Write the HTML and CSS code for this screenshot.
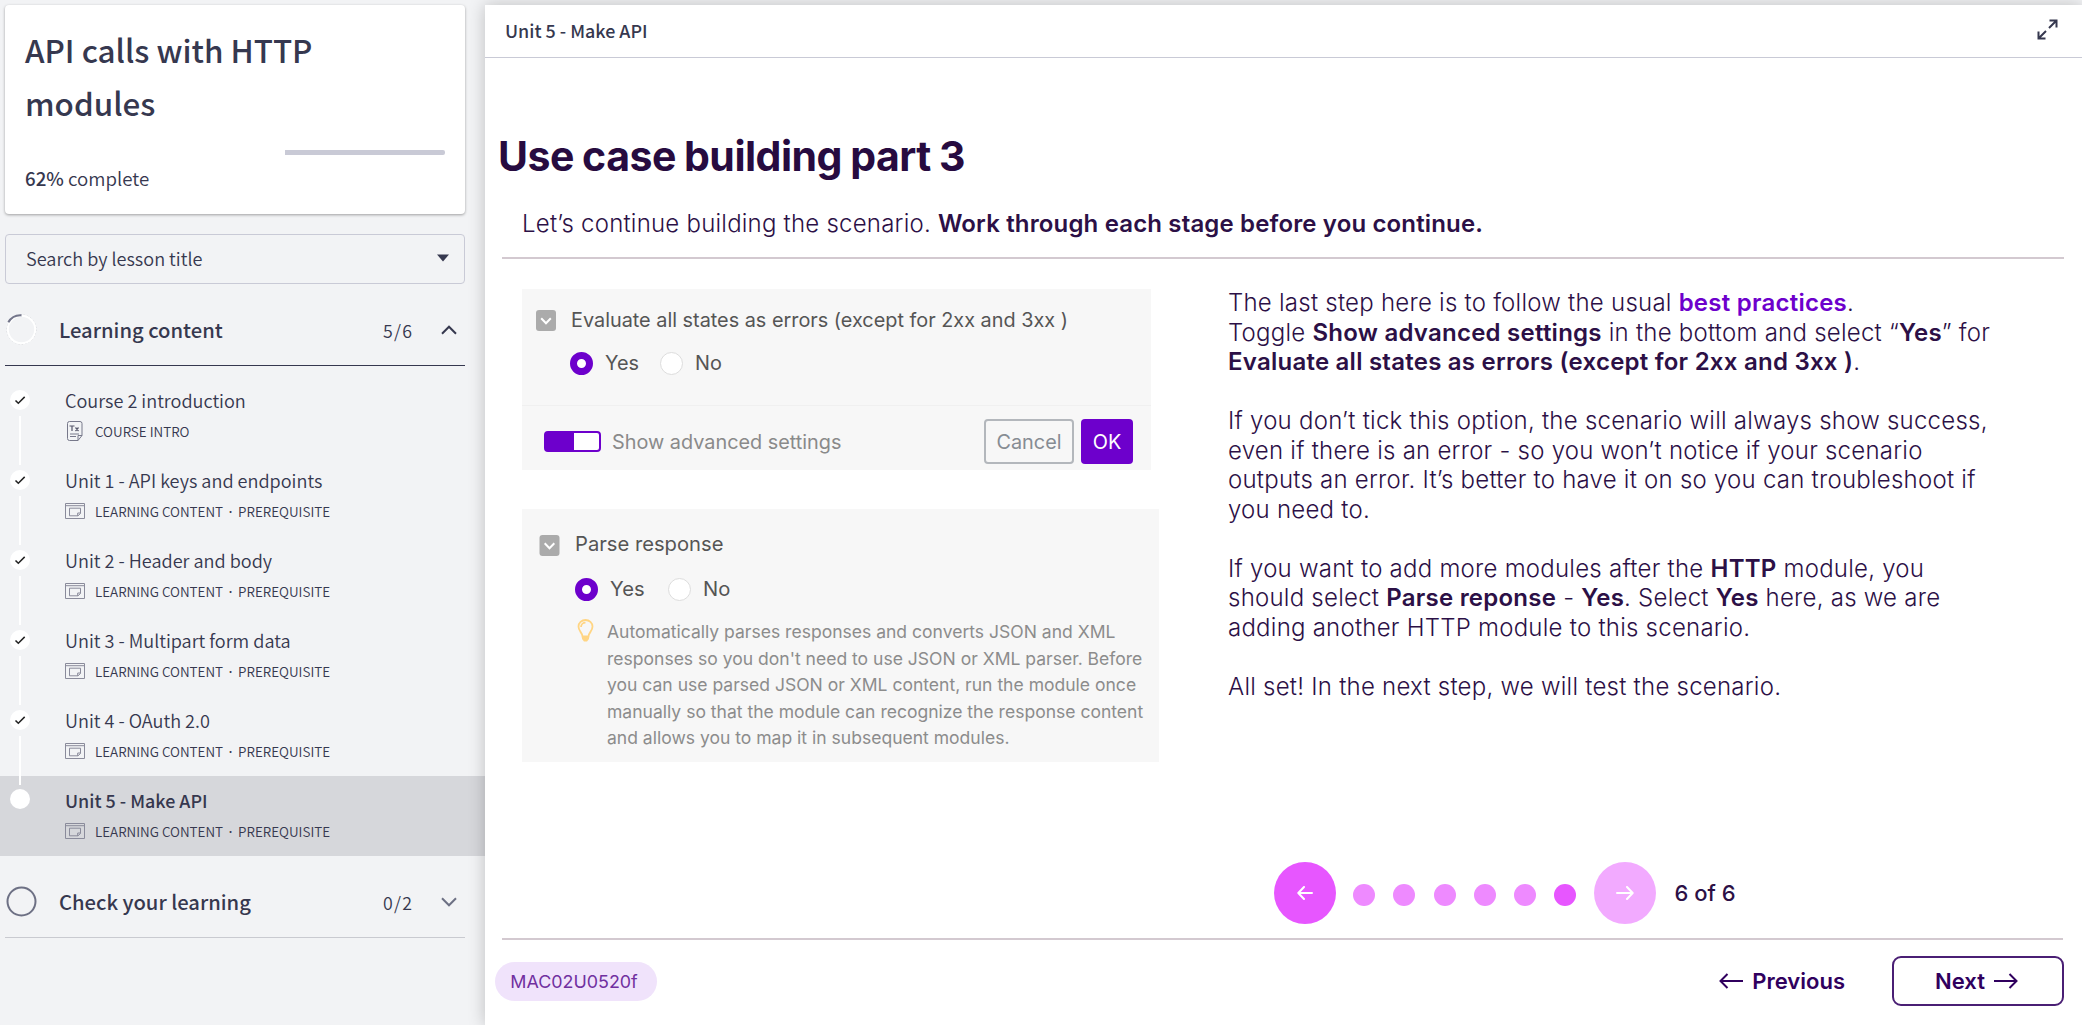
FILE: index.html
```html
<!DOCTYPE html>
<html lang="en">
<head>
<meta charset="utf-8">
<title>API calls with HTTP modules</title>
<link rel="stylesheet" href="styles.css">
</head>
<body>
<svg class="defs" width="0" height="0">
  <symbol id="check" viewBox="0 0 20 20"><path d="M5.5 10.4l2.8 2.9 6.4-6.4" fill="none" stroke="#222" stroke-width="1.5"/></symbol>
  <symbol id="lesson" viewBox="0 0 20 16"><path d="M.5.5h19v15H.5zM.5 2.7h19M4.5 5.2h11v5.3l-2.5 2.3H4.5zM15.5 10h-2.8v2.8" fill="none" stroke="#8a8b9b" stroke-width="1"/></symbol>
  <symbol id="fold" viewBox="0 0 20 21"><rect width="20" height="21" rx="3" fill="#ababab"/><path d="M5.2 8.2l4.8 5 4.8-5" fill="none" stroke="#fff" stroke-width="2"/></symbol>
</svg>
<div class="app">
  <aside class="sidebar">
    <div class="card">
      <h2 class="course">API calls with HTTP<br>modules</h2>
      <div class="bar"><div class="rest"></div></div>
      <p class="complete"><b>62%</b> complete</p>
    </div>
    <div class="search"><span>Search by lesson title</span><svg width="12" height="8" viewBox="0 0 12 8"><path d="M0 .5h12L6 7.5z" fill="#36384f"/></svg></div>
    <div class="section open">
      <svg class="ring" width="31" height="31" viewBox="0 0 31 31"><circle cx="15.5" cy="15.5" r="14.5" fill="none" stroke="#c4c5cc" stroke-width="1" stroke-dasharray="1.5 2"/><circle cx="15.5" cy="15.5" r="13.7" fill="none" stroke="#fff" stroke-width="2"/><path d="M2.4 8.3A14 14 0 0 1 15.5 1.3" fill="none" stroke="#73758a" stroke-width="2.2"/></svg>
      <h3>Learning content</h3><span class="count">5/6</span>
      <svg width="16" height="10" viewBox="0 0 16 10"><path d="M1 8.7l7-7 7 7" fill="none" stroke="#36384f" stroke-width="2"/></svg>
    </div>
    <ul class="lessons">
      <li><svg class="dot" width="20" height="20"><use href="#check"/></svg><i class="track"></i><div class="info"><p class="name">Course 2 introduction</p><p class="meta"><svg width="20" height="20" viewBox="0 0 20 20"><path d="M4.5.5h10.5q2 0 2 2v12l-4 5H4.5q-2 0-2-2v-15q0-2 2-2zM17 14.5h-4v5M5 13h9M5 15.5h6" fill="none" stroke="#77788a"/><path d="M4.5 5h5M7 5v5M10.5 6.5l3 3.5M13.5 6.5l-3 3.5" fill="none" stroke="#55566a" stroke-width="1.2"/></svg><span>COURSE INTRO</span></p></div></li>
      <li><svg class="dot" width="20" height="20"><use href="#check"/></svg><i class="track"></i><div class="info"><p class="name">Unit 1 - API keys and endpoints</p><p class="meta"><svg width="20" height="16"><use href="#lesson"/></svg><span>LEARNING CONTENT <i class="sep">·</i> PREREQUISITE</span></p></div></li>
      <li><svg class="dot" width="20" height="20"><use href="#check"/></svg><i class="track"></i><div class="info"><p class="name">Unit 2 - Header and body</p><p class="meta"><svg width="20" height="16"><use href="#lesson"/></svg><span>LEARNING CONTENT <i class="sep">·</i> PREREQUISITE</span></p></div></li>
      <li><svg class="dot" width="20" height="20"><use href="#check"/></svg><i class="track"></i><div class="info"><p class="name">Unit 3 - Multipart form data</p><p class="meta"><svg width="20" height="16"><use href="#lesson"/></svg><span>LEARNING CONTENT <i class="sep">·</i> PREREQUISITE</span></p></div></li>
      <li><svg class="dot" width="20" height="20"><use href="#check"/></svg><i class="track"></i><div class="info"><p class="name">Unit 4 - OAuth 2.0</p><p class="meta"><svg width="20" height="16"><use href="#lesson"/></svg><span>LEARNING CONTENT <i class="sep">·</i> PREREQUISITE</span></p></div></li>
      <li class="active"><span class="dot"></span><div class="info"><p class="name">Unit 5 - Make API</p><p class="meta"><svg width="20" height="16"><use href="#lesson"/></svg><span>LEARNING CONTENT <i class="sep">·</i> PREREQUISITE</span></p></div></li>
    </ul>
    <div class="section closed">
      <svg class="ring" width="31" height="31" viewBox="0 0 31 31"><circle cx="15.5" cy="15.5" r="14" fill="none" stroke="#6d7084" stroke-width="2"/></svg>
      <h3>Check your learning</h3><span class="count">0/2</span>
      <svg width="16" height="10" viewBox="0 0 16 10"><path d="M1 1.3l7 7 7-7" fill="none" stroke="#6d7084" stroke-width="2"/></svg>
    </div>
  </aside>
  <main class="main">
    <header class="top"><span>Unit 5 - Make API</span>
      <svg width="21" height="21" viewBox="0 0 21 21"><path d="M12 9l7-7M12.5 1.5h7v7M9 12l-7 7M8.5 19.5h-7v-7" fill="none" stroke="#36384f" stroke-width="2"/></svg>
    </header>
    <div class="slide">
      <h1>Use case building part 3</h1>
      <p class="lead"><span>Let’s continue building the scenario. </span><b>Work through each stage before you continue.</b></p>
      <div class="cols">
        <div class="shots">
          <div class="panel one">
            <div class="opt"><svg width="20" height="21"><use href="#fold"/></svg><span class="label">Evaluate all states as errors (except for 2xx and 3xx )</span></div>
            <div class="radios"><i class="radio on"></i><span class="yes">Yes</span><i class="radio"></i><span class="no">No</span></div>
            <div class="foot"><i class="toggle"></i><span class="adv">Show advanced settings</span><span class="btn cancel">Cancel</span><span class="btn ok">OK</span></div>
          </div>
          <div class="panel two">
            <div class="opt"><svg width="21" height="21"><use href="#fold"/></svg><span class="label">Parse response</span></div>
            <div class="radios"><i class="radio on"></i><span class="yes">Yes</span><i class="radio"></i><span class="no">No</span></div>
            <div class="tip"><svg width="17" height="23" viewBox="0 0 17 23"><path d="M5.5 17.5c0-4-4-5-4-10a7 6.5 0 0 1 14 0c0 5-4 6-4 10z" fill="none" stroke="#ffd583" stroke-width="1.8"/><path d="M4 8a4.5 4.5 0 0 1 4.5-4.3" fill="none" stroke="#ffd583" stroke-width="1.8"/><path d="M5 17.5h7v2.5l-2 2.5H7l-2-2.5z" fill="#ffd583"/></svg><p>Automatically parses responses and converts JSON and XML<br>responses so you don't need to use JSON or XML parser. Before<br>you can use parsed JSON or XML content, run the module once<br>manually so that the module can recognize the response content<br>and allows you to map it in subsequent modules.</p></div>
          </div>
        </div>
        <div class="text">
          <p>The last step here is to follow the usual <b class="link">best practices</b>.<br>Toggle <b>Show advanced settings</b> in the bottom and select “<b>Yes</b>” for<br><b>Evaluate all states as errors (except for 2xx and 3xx )</b>.</p>
          <p>If you don’t tick this option, the scenario will always show success,<br>even if there is an error - so you won’t notice if your scenario<br>outputs an error. It’s better to have it on so you can troubleshoot if<br>you need to.</p>
          <p>If you want to add more modules after the <b>HTTP</b> module, you<br>should select <b>Parse reponse</b> - <b>Yes</b>. Select <b>Yes</b> here, as we are<br>adding another HTTP module to this scenario.</p>
          <p>All set! In the next step, we will test the scenario.</p>
        </div>
      </div>
      <div class="pager">
        <span class="circle"><svg width="16" height="14" viewBox="0 0 16 14"><path d="M15 7H1.5M7 1L1.3 7 7 13" fill="none" stroke="#fff" stroke-width="2" stroke-linecap="round" stroke-linejoin="round"/></svg></span>
        <span class="dots"><i></i><i></i><i></i><i></i><i></i><i class="cur"></i></span>
        <span class="circle off"><svg width="18" height="14" viewBox="0 0 18 14"><path d="M1 7h15.5M11 1l5.7 6L11 13" fill="none" stroke="#fff" stroke-width="2" stroke-linecap="round" stroke-linejoin="round"/></svg></span>
        <span class="num">6 of 6</span>
      </div>
      <footer class="bottom">
        <span class="tag">MAC02U0520f</span>
        <span class="prev"><svg width="25" height="16" viewBox="0 0 25 16"><path d="M24 8H2M8.5 1L1.5 8l7 7" fill="none" stroke="#30005e" stroke-width="2"/></svg><span>Previous</span></span>
        <span class="next"><span>Next</span><svg width="25" height="16" viewBox="0 0 25 16"><path d="M1 8h22M16.5 1l7 7-7 7" fill="none" stroke="#30005e" stroke-width="2"/></svg></span>
      </footer>
    </div>
  </main>
</div>
</body>
</html>
```
FILE: styles.css
```css
* { box-sizing: border-box; }
body { margin: 0; background: #f2f3f5; overflow: hidden; }
h1, h2, h3, p, ul { margin: 0; padding: 0; font-weight: inherit; }
ul { list-style: none; }
svg { display: block; flex: none; }
.defs { position: absolute; }
.app { display: flex; height: 1025px; }

/* Sidebar */
.sidebar { width: 485px; flex: none; padding-top: 5px; font-family: "Noto Sans CJK SC", sans-serif; font-weight: 350; color: #36384f; }
.card { width: 460px; height: 209px; margin-left: 5px; padding: 18px 20px; background: #fff; border-radius: 4px; box-shadow: 0 1px 3px rgba(0, 0, 0, .35); }
.course { font-size: 31.4px; line-height: 53px; font-weight: 500; }
.bar { display: flex; justify-content: flex-end; height: 5px; margin-top: 21px; }
.rest { width: 160px; background: #c9cad6; border-radius: 0 2px 2px 0; }
.complete { margin-top: 10px; font-size: 18.7px; line-height: 26px; }
.complete b { font-weight: 500; }
.search { display: flex; align-items: center; justify-content: space-between; width: 460px; height: 50px; margin: 20px 0 0 5px; padding: 0 15px 3px 20px; border: 1px solid #c9cad6; border-radius: 4px; font-size: 18.1px; line-height: 26px; }
.section { display: flex; align-items: center; width: 460px; height: 82px; margin-left: 5px; padding: 10px 8px 0 1px; }
.section h3 { flex: 1; margin-left: 22px; font-size: 20.2px; line-height: 30px; font-weight: 500; }
.count { width: 58px; font-size: 17.8px; letter-spacing: 1.3px; }
.open { border-bottom: 1px solid #36384f; }
.closed { border-bottom: 1px solid #c9cad0; }
.lessons { padding-top: 10px; }
.lessons li { position: relative; display: flex; height: 80px; padding: 14px 0 0 10px; }
.dot { width: 20px; height: 20px; flex: none; border-radius: 50%; background: #fff; }
.active .dot { margin-top: -1px; }
.track { position: absolute; left: 19px; top: 40px; width: 2px; height: 49px; background: #fff; z-index: 1; }
.info { margin-left: 35px; }
.name { font-size: 18.1px; line-height: 26px; margin-top: -3px; }
.meta { display: flex; align-items: center; gap: 10px; height: 22px; margin-top: 7px; font-size: 13.45px; line-height: 22px; }
.sep { margin: 0 2.5px; font-family: Inter, sans-serif; font-style: normal; font-weight: 500; }
.active { background: #d6d7db; }
.active .name { font-size: 17.9px; font-weight: 500; }

/* Main panel */
.main { position: relative; z-index: 2; flex: 1; margin-top: 5px; background: #fff; box-shadow: 0 0 16px rgba(0, 0, 0, .22); font-family: Inter, sans-serif; color: #2c1046; }
.top { display: flex; align-items: center; justify-content: space-between; height: 53px; padding: 0 24px 3px 20px; border-bottom: 1px solid #c9cad6; font-family: "Noto Sans CJK SC", sans-serif; font-size: 17.9px; font-weight: 500; line-height: 24px; color: #36384f; }
.slide { padding: 0 18px 0 17px; }
h1 { height: 99px; margin-left: -4px; padding-top: 72px; font-size: 41px; line-height: 52px; font-weight: 700; letter-spacing: -.5px; word-spacing: -1px; color: #270b40; }
.lead { height: 102px; padding: 52px 0 0 20px; border-bottom: 2px solid #d3c9d0; font-size: 24px; line-height: 30px; font-weight: 300; letter-spacing: .22px; white-space: pre; }
b { font-weight: 600; }
.lead b { letter-spacing: .15px; }
.cols { display: flex; height: 573px; }
.shots { width: 638px; margin: 30px 0 0 20px; }
.panel { background: #f7f7f7; color: #555; font-size: 19.85px; line-height: 24px; }
.one { width: 629px; height: 181px; padding-top: 19px; }
.two { width: 637px; height: 253px; margin-top: 39px; padding-top: 23px; font-size: 20.2px; }
.opt { display: flex; align-items: center; gap: 15px; padding-left: 14px; }
.two .opt { padding-left: 17px; }
.two .opt svg { margin-top: 3px; }
.radios { display: flex; align-items: center; padding: 19px 0 0 48px; }
.two .radios { padding: 21px 0 0 53px; }
.radio { width: 23px; height: 23px; border-radius: 50%; background: #fff; border: 1px solid #ddd; }
.radio.on { border: 7px solid #6d00cc; }
.yes { width: 67px; padding-left: 12px; }
.no { padding-left: 12px; }
.two .yes { width: 70px; }
.foot { display: flex; align-items: center; height: 66px; margin-top: 30px; border-top: 1px solid #f0f0f0; padding: 6px 18px 0 22px; color: #8a8a8a; }
.toggle { width: 57px; height: 21px; border: 2px solid #6d00cc; border-left-width: 30px; border-radius: 4px; background: #fff; }
.adv { flex: 1; padding-left: 11px; }
.btn { display: flex; justify-content: center; align-items: center; height: 45px; border-radius: 4px; }
.cancel { width: 90px; border: 2px solid #b3b7bc; color: #868c93; }
.ok { width: 52px; margin-left: 7px; background: #6d00cc; color: #fff; }
.tip { display: flex; gap: 13px; padding: 18px 0 0 55px; font-size: 17.55px; line-height: 26.6px; color: #8c8c8c; }
.text { margin: 29px 0 0 68px; font-size: 24px; line-height: 29.54px; font-weight: 300; letter-spacing: .24px; white-space: nowrap; }
.text p + p { margin-top: 29.54px; }
.link { color: #6d00cc; }
.pager { display: flex; align-items: center; height: 106px; padding: 15px 0 0 772px; }
.circle { display: flex; align-items: center; justify-content: center; width: 62px; height: 62px; border-radius: 50%; background: #e756ff; }
.circle.off { background: #f2aaff; }
.dots { display: flex; gap: 18.3px; margin: 4px 18px 0 17px; }
.dots i { width: 22px; height: 22px; border-radius: 50%; background: #ee8aff; }
.dots .cur { background: #e756ff; }
.num { margin-left: 18px; font-size: 22px; font-weight: 500; }
.bottom { display: flex; align-items: center; height: 84px; margin-right: 1px; border-top: 2px solid #d3c9d0; color: #30005e; font-size: 22px; font-weight: 600; }
.tag { display: flex; align-items: center; justify-content: center; width: 162px; height: 39px; margin-left: -7px; padding-right: 4px; border-radius: 20px; background: #f0e3fb; color: #7030a0; font-size: 17.9px; font-weight: 400; }
.prev { display: flex; align-items: center; gap: 8px; margin-left: auto; }
.next { display: flex; align-items: center; justify-content: center; gap: 8px; width: 172px; height: 50px; margin: 0 -1px 0 47px; padding-right: 3px; border: 2px solid #4a1f74; border-radius: 9px; }
```
